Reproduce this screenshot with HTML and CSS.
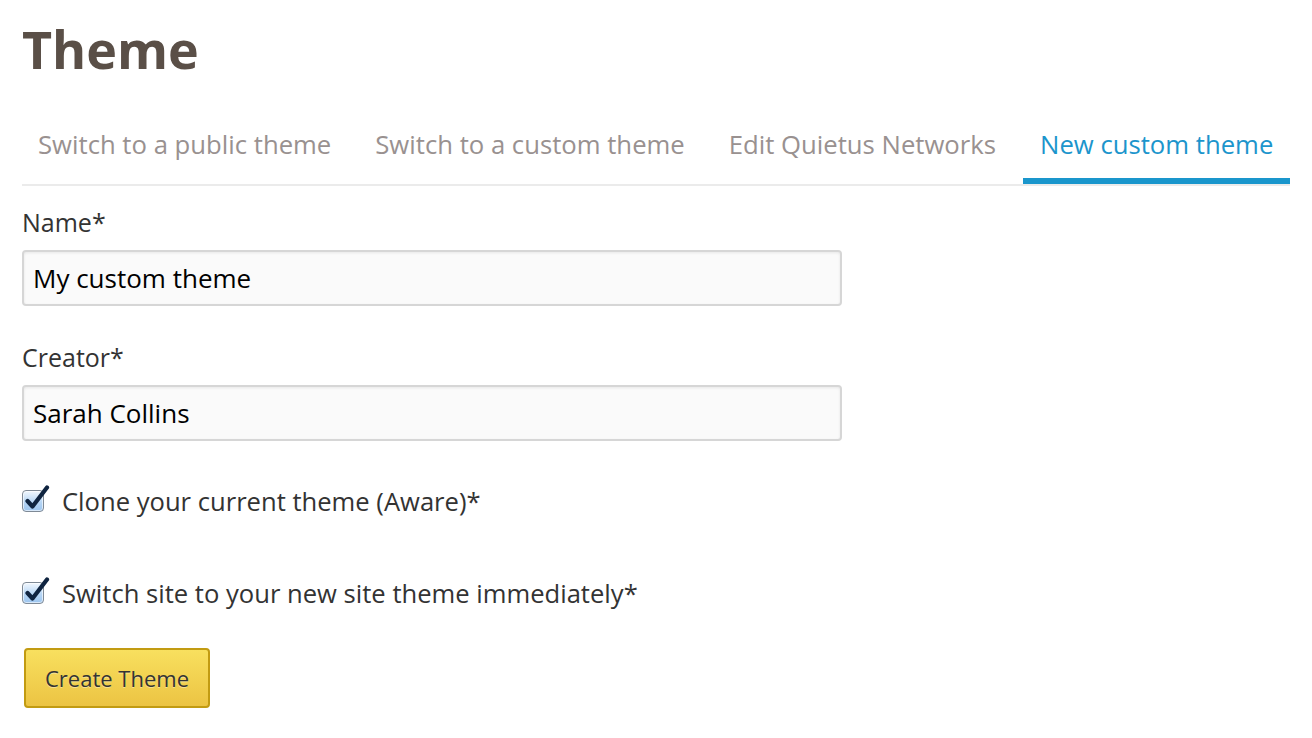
FILE: index.html
```html
<!DOCTYPE html>
<html lang="en">
  <head>
    <meta charset="utf-8" />
    <link rel="stylesheet" href="styles.css">
  </head>
  <body>
    <main class="page">
      <h1 class="title">Theme</h1>
      <nav class="tabs">
        <a class="tab">Switch to a public theme</a>
        <a class="tab">Switch to a custom theme</a>
        <a class="tab">Edit Quietus Networks</a>
        <a class="tab active">New custom theme</a>
      </nav>
      <form class="theme-form">
        <label class="field">
          <span class="field-label">Name*</span>
          <input class="text-input" type="text" value="My custom theme">
        </label>
        <label class="field">
          <span class="field-label">Creator*</span>
          <input class="text-input" type="text" value="Sarah Collins">
        </label>
        <div class="check-row">
          <span class="checkbox">
            <svg viewBox="0 0 28 26" width="28" height="26"><path d="M4.5 16 L9.5 21.5 L24 2.5" fill="none" stroke="#0f2440" stroke-width="4.2" stroke-linecap="round" stroke-linejoin="round"/></svg>
          </span>
          <span class="check-label">Clone your current theme (Aware)*</span>
        </div>
        <div class="check-row">
          <span class="checkbox">
            <svg viewBox="0 0 28 26" width="28" height="26"><path d="M4.5 16 L9.5 21.5 L24 2.5" fill="none" stroke="#0f2440" stroke-width="4.2" stroke-linecap="round" stroke-linejoin="round"/></svg>
          </span>
          <span class="check-label">Switch site to your new site theme immediately*</span>
        </div>
        <button class="btn-create" type="button">Create Theme</button>
      </form>
    </main>
  </body>
</html>
```

FILE: styles.css
```css
body {
  margin: 0;
  background: #fff;
  font-family: "Open Sans", "Noto Sans", sans-serif;
  color: #333;
}

.page {
  padding: 14px 22px 0 22px;
}

.title {
  margin: 0;
  font-size: 52px;
  font-weight: 700;
  color: #5a4f47;
  line-height: 70px;
}

.tabs {
  display: flex;
  gap: 10px;
  margin-top: 40px;
  border-bottom: 2px solid #ebebeb;
}

.tab {
  flex: none;
  white-space: nowrap;
  padding: 0 17px;
  height: 60px;
  line-height: 42px;
  font-size: 25.7px;
  color: #999190;
  box-sizing: border-box;
}

.tab:first-child {
  padding-left: 16px;
}

.tab.active {
  color: #1c95cc;
  border-bottom: 6px solid #1a96cc;
  margin-bottom: -1px;
}

.theme-form {
  display: flex;
  flex-direction: column;
  align-items: flex-start;
}

.field {
  display: flex;
  flex-direction: column;
  margin-top: 18px;
}

.field + .field {
  margin-top: 33px;
}

.field-label {
  font-size: 25px;
  line-height: 36px;
  color: #333;
}

.text-input {
  margin-top: 10px;
  width: 820px;
  height: 56px;
  box-sizing: border-box;
  padding: 0 9px;
  border: 2px solid #d6d6d6;
  border-radius: 4px;
  background: #fafafa;
  box-shadow: inset 0 1px 3px rgba(0, 0, 0, 0.08);
  font-family: "Open Sans", "Noto Sans", sans-serif;
  font-size: 26px;
  color: #000;
}

.check-row {
  display: flex;
  align-items: center;
  gap: 18px;
  margin-top: 43px;
  height: 34px;
}

.check-row + .check-row {
  margin-top: 58px;
}

.checkbox {
  position: relative;
  width: 20px;
  height: 20px;
  border: 1px solid #7f8a96;
  border-radius: 4px;
  background: linear-gradient(#f2f8fe, #b7d6f5 55%, #9cc5ef);
  box-shadow: inset 0 0 0 1px rgba(255, 255, 255, 0.6);
}

.checkbox svg {
  position: absolute;
  left: 0;
  top: -6px;
}

.check-label {
  font-size: 25.6px;
  color: #333;
}

.btn-create {
  margin-top: 38px;
  margin-left: 2px;
  width: 186px;
  height: 60px;
  border: 2px solid #c29b12;
  border-radius: 4px;
  background: linear-gradient(#f8e05f, #ecc443);
  font-family: "Open Sans", "Noto Sans", sans-serif;
  font-size: 22px;
  color: #333;
  text-shadow: 0 1px 0 rgba(255, 255, 255, 0.4);
  cursor: pointer;
}
```
